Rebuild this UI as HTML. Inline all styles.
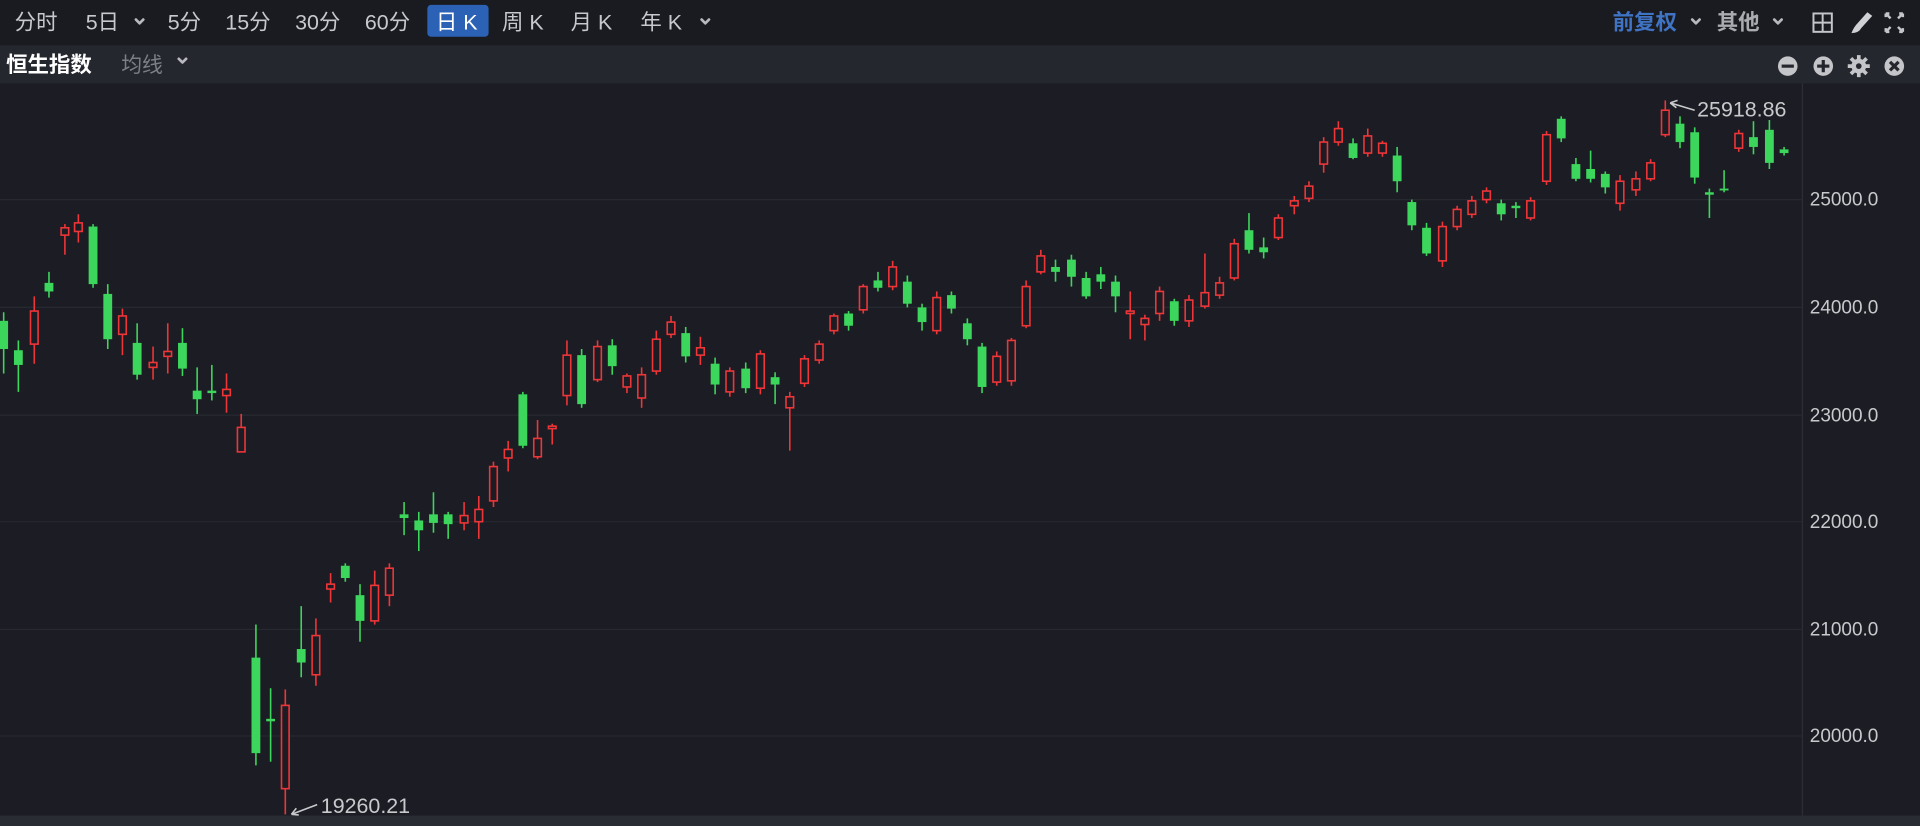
<!DOCTYPE html>
<html><head><meta charset="utf-8"><style>
html,body{margin:0;padding:0;background:#1c1d24;width:1920px;height:826px;overflow:hidden}
svg{display:block}
text{font-family:"Liberation Sans","Noto Sans CJK SC",sans-serif}
</style></head><body>
<svg id="s" width="1920" height="826" viewBox="0 0 1568 674.5" preserveAspectRatio="none" xmlns="http://www.w3.org/2000/svg">
<rect x="0" y="0" width="1568" height="675" fill="#1c1d24"/>
<rect x="0" y="0" width="1568" height="37" fill="#1a1b21"/>
<rect x="0" y="37" width="1568" height="31" fill="#25272e"/>
<rect x="0" y="666" width="1568" height="9" fill="#2a2c33"/>
<line x1="1472" y1="68" x2="1472" y2="666" stroke="#2c2e35" stroke-width="1"/>
<g stroke="#272930" stroke-width="1">
<line x1="0" y1="163" x2="1472" y2="163"/><line x1="0" y1="251" x2="1472" y2="251"/>
<line x1="0" y1="339" x2="1472" y2="339"/><line x1="0" y1="426" x2="1472" y2="426"/>
<line x1="0" y1="514" x2="1472" y2="514"/><line x1="0" y1="601" x2="1472" y2="601"/>
</g>
<g fill="#c8c9cd" font-size="17.5">
<text x="12" y="24">分时</text>
<text x="70" y="24">5日</text>
<text x="137" y="24">5分</text>
<text x="184" y="24">15分</text>
<text x="241" y="24">30分</text>
<text x="298" y="24">60分</text>
<rect x="349" y="4" width="50" height="26" rx="3" fill="#2c62b6"/>
<text x="356" y="24" fill="#fff">日 K</text>
<text x="410" y="24">周 K</text>
<text x="466" y="24">月 K</text>
<text x="523" y="24">年 K</text>
<text x="1317" y="24" fill="#3f73c4" font-weight="bold">前复权</text>
<text x="1402" y="24" font-weight="bold" fill="#a9abb0">其他</text>
<text x="5" y="59" fill="#fff" font-weight="bold" font-size="17.5">恒生指数</text>
<text x="99" y="59" fill="#7d7f86" font-size="17">均线</text>
</g>
<g fill="none" stroke="#b8b9be" stroke-width="2.2" stroke-linecap="round" stroke-linejoin="round">
<path d="M111 16 L114 19 L117 16"/><path d="M573 16 L576 19 L579 16"/>
<path d="M1382 16 L1385 19 L1388 16"/><path d="M1449 16 L1452 19 L1455 16"/>
<path d="M146 48 L149 51 L152 48"/>
</g>
<g fill="none" stroke="#c4c5c9" stroke-width="1.6">
<rect x="1481" y="11" width="15" height="15"/><line x1="1488.5" y1="11" x2="1488.5" y2="26"/><line x1="1481" y1="18.5" x2="1496" y2="18.5"/>
<path d="M1540 11 L1544 15 M1540 11 L1540 14 M1540 11 L1543 11 M1554 11 L1550 15 M1554 11 L1554 14 M1554 11 L1551 11 M1540 26 L1544 22 M1540 26 L1540 23 M1540 26 L1543 26 M1554 26 L1550 22 M1554 26 L1554 23 M1554 26 L1551 26" stroke-width="2"/>
</g>
<path d="M1525 10 L1529 13 L1520 23 Q1518 27 1512 27 Q1514 22 1517 19 Z" fill="#d0d1d5"/>
<g fill="#c4c5c9">
<circle cx="1460" cy="54" r="8"/><circle cx="1489" cy="54" r="8"/><circle cx="1518" cy="54" r="6"/><circle cx="1547" cy="54" r="8"/>
</g>
<g stroke="#25272e" stroke-width="2.6">
<line x1="1455" y1="54" x2="1465" y2="54"/>
<line x1="1484" y1="54" x2="1494" y2="54"/><line x1="1489" y1="49" x2="1489" y2="59"/>
<line x1="1543.5" y1="50.5" x2="1550.5" y2="57.5"/><line x1="1550.5" y1="50.5" x2="1543.5" y2="57.5"/>
</g>
<g stroke="#c4c5c9" stroke-width="3">
<line x1="1518" y1="45" x2="1518" y2="63"/><line x1="1509" y1="54" x2="1527" y2="54"/>
<line x1="1511.6" y1="47.6" x2="1524.4" y2="60.4"/><line x1="1524.4" y1="47.6" x2="1511.6" y2="60.4"/>
</g>
<circle cx="1518" cy="54" r="2.3" fill="#25272e"/>
<g fill="#c8c9cd" font-size="15.5">
<text x="1478" y="168">25000.0</text><text x="1478" y="256">24000.0</text>
<text x="1478" y="344">23000.0</text><text x="1478" y="431">22000.0</text>
<text x="1478" y="519">21000.0</text><text x="1478" y="606">20000.0</text>
<text x="1386" y="95" font-size="17.5">25918.86</text>
<text x="262" y="664" font-size="17.5">19260.21</text>
</g>
<g stroke="#c8c9cd" stroke-width="1.3" fill="none">
<path d="M1384 90 L1364 84 M1364 84 L1370 82 M1364 84 L1369 88"/>
<path d="M259 657 L238 665 M238 665 L244 665.5 M238 665 L242 660"/>
</g>
<g id="c"></g>
</svg>
<script>
var d=[[3,'g',262,285,255,305],[15,'g',286,298,278,320],[28,'r',254,281,242,297],[40,'g',231,238,222,243],[53,'r',186,192,183,208],[64,'r',182,189,175,198],[76,'g',185,232,183,235],[88,'g',240,277,232,285],[100,'r',258,273,252,290],[112,'g',280,306,264,310],[125,'r',296,300,283,310],[137,'r',287,291,264,305],[149,'g',280,301,268,307],[161,'g',319,326,300,338],[173,'g',319,321,298,327],[185,'r',318,323,305,337],[197,'r',349,369,338,369],
[209,'g',537,615,510,625],[221,'g',587,589,562,622],[233,'r',576,644,563,665],[246,'g',530,541,495,553],[258,'r',519,551,505,560],[270,'r',477,481,468,492],[282,'g',462,472,460,475],[294,'g',486,507,477,524],[306,'r',478,507,466,510],[318,'r',464,486,460,495],[330,'g',420,423,410,437],[342,'g',425,433,418,450],[354,'g',420,427,402,435],[366,'g',420,428,418,440],[379,'r',421,427,410,433],[391,'r',416,426,405,440],[403,'r',381,409,377,414],[415,'r',367,374,360,385],[427,'g',322,364,320,366],[439,'r',358,373,343,375],[451,'r',348,350,346,363],[463,'r',290,323,278,331],[475,'g',290,330,285,333],[488,'r',283,310,278,312],[500,'g',282,299,277,306],[512,'r',307,316,305,321],[524,'r',306,325,300,333],[536,'r',277,303,270,306],[548,'r',263,273,258,276],[560,'g',272,291,267,296],[572,'r',284,290,275,298],[584,'g',297,314,292,322],[596,'r',303,320,300,324],[609,'g',301,317,296,321],[621,'r',289,317,286,322],[633,'g',308,314,304,330],[645,'r',324,333,320,368],[657,'r',293,313,290,316],[669,'r',281,294,278,297],[681,'r',258,270,256,273],[693,'g',256,266,254,270],[705,'r',234,253,232,256],[717,'g',229,235,222,238],[729,'r',218,234,213,237],[741,'g',230,248,225,251],[753,'g',251,263,248,270],[765,'r',243,270,238,273],[777,'g',241,252,238,256],[790,'g',264,277,260,282],[802,'g',283,316,280,321],[814,'r',291,312,287,315],[826,'r',278,311,276,315],[838,'r',234,266,229,268],[850,'r',209,222,204,224],[862,'g',218,222,212,230],[875,'g',212,226,208,234],[887,'g',227,242,222,244],[899,'g',224,230,218,236],[911,'g',230,242,225,255],[923,'r',254,256,238,277],[935,'r',260,265,257,278],[947,'r',238,256,234,262],[959,'g',246,262,244,266],[971,'r',245,262,241,267],[984,'r',239,250,207,252],[996,'r',231,241,226,244],[1008,'r',199,227,195,229],[1020,'g',188,204,174,207],[1032,'g',202,206,194,211],[1044,'r',178,194,175,196],[1057,'r',164,168,160,175],[1069,'r',152,162,148,165],[1081,'r',116,134,112,141],[1093,'r',105,116,99,119],[1105,'g',117,129,113,130],[1117,'r',111,125,105,128],[1129,'r',117,125,115,128],[1141,'g',127,148,120,157],[1153,'g',165,184,163,188],[1165,'g',186,207,182,209],[1178,'r',185,213,181,218],[1190,'r',171,185,168,188],[1202,'r',164,175,160,178],[1214,'r',156,163,153,166],[1226,'g',166,175,163,180],[1238,'g',168,170,165,178],[1250,'r',164,178,161,180],[1263,'r',110,148,107,151],[1275,'g',97,113,95,116],[1287,'g',134,146,129,148],[1299,'g',138,146,123,149],[1311,'g',142,153,140,158],[1323,'r',148,166,143,172],[1336,'r',146,155,140,160],[1348,'r',133,146,130,148],[1360,'r',90,110,82,112],[1372,'g',101,116,95,121],[1384,'g',108,145,104,150],[1396,'g',157,159,154,178],[1408,'g',154,155,139,157],[1420,'r',109,121,106,124],[1432,'g',112,120,99,126],[1445,'g',106,133,98,138],[1457,'g',122,125,120,127]];
var h='';
d.forEach(function(c){var x=c[0],col=c[1]=='g'?'#3dd65c':'#ee3538';
h+='<line x1="'+x+'" y1="'+c[4]+'" x2="'+x+'" y2="'+c[5]+'" stroke="'+col+'" stroke-width="1.3"/>';
var hgt=Math.max(c[3]-c[2],1.5);
if(c[1]=='g')h+='<rect x="'+(x-3.6)+'" y="'+c[2]+'" width="7.2" height="'+hgt+'" fill="'+col+'"/>';
else h+='<rect x="'+(x-3.1)+'" y="'+c[2]+'" width="6.2" height="'+hgt+'" fill="#1c1d24" stroke="'+col+'" stroke-width="1.3"/>';});
document.getElementById('c').innerHTML=h;
</script>
</body></html>
